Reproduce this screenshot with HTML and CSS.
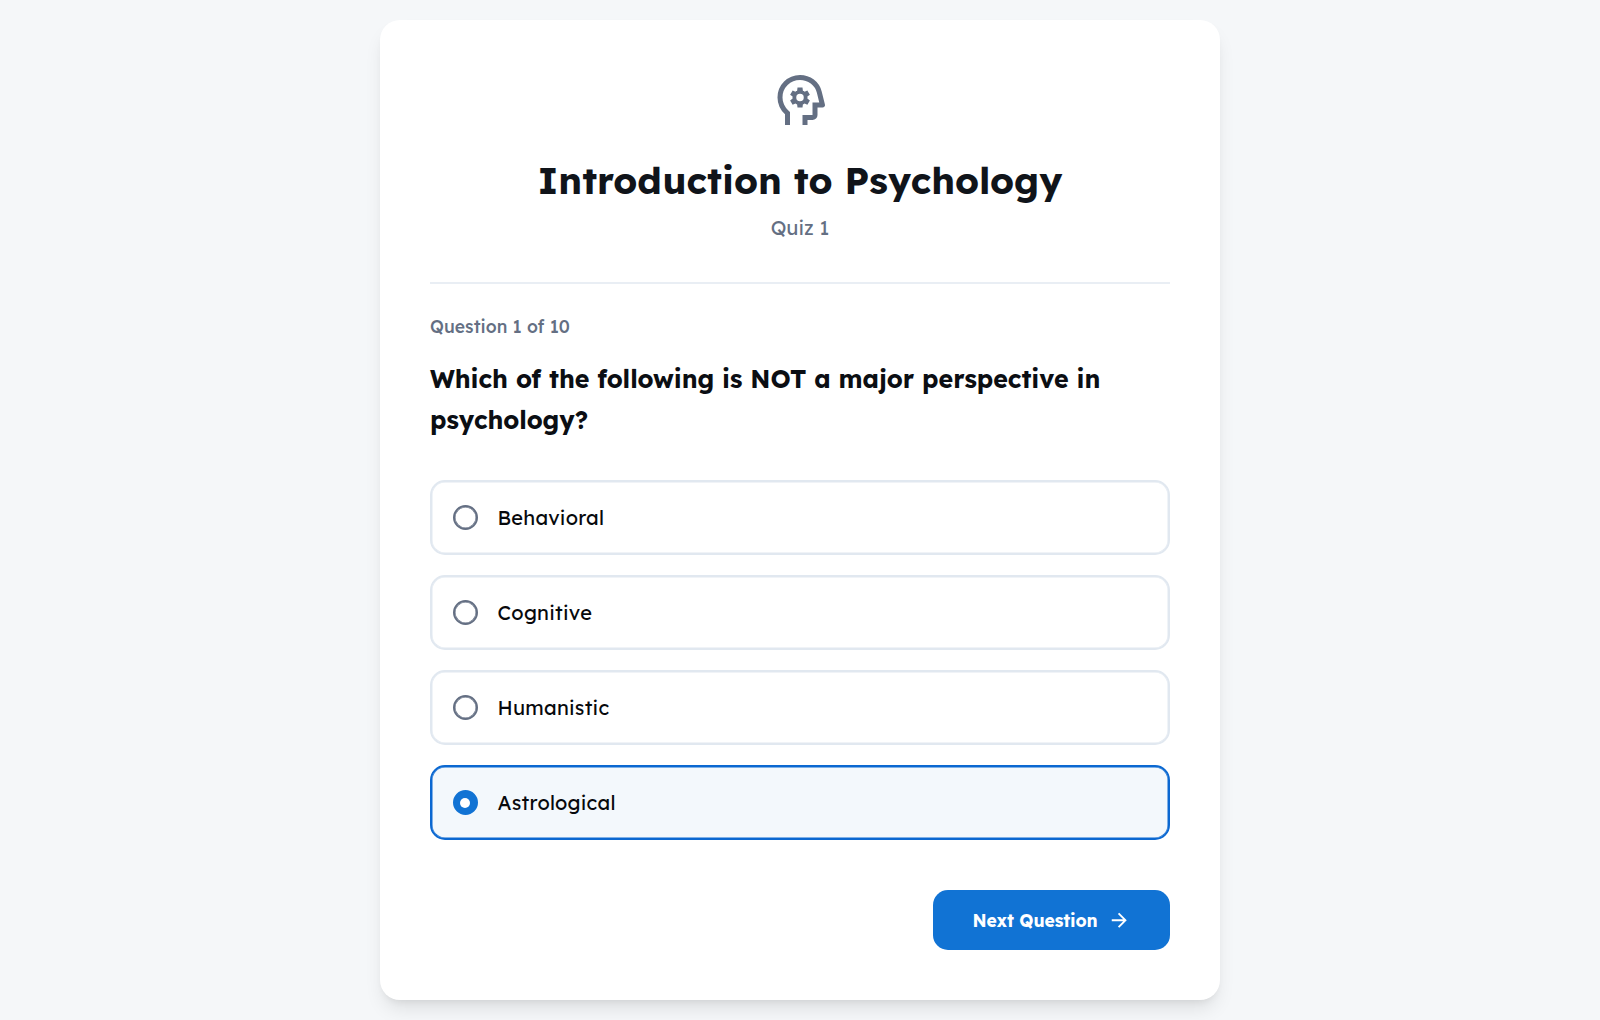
FILE: index.html
```html
<!DOCTYPE html>
<html lang="en">
<head>
<meta charset="utf-8">
<title>Introduction to Psychology</title>
<link rel="stylesheet" href="styles.css">
</head>
<body>
<main class="card">
  <header class="header">
    <svg class="logo" viewBox="0 -960 960 960" aria-hidden="true"><path d="M240-80v-172q-57-52-88.500-121.500T120-520q0-150 105-255t255-105q125 0 221.500 73.500T827-615l52 205q5 19-7 34.500T840-360h-80v120q0 33-23.500 56.500T680-160h-80v80h-80v-160h160v-200h108l-38-155q-23-91-98-148t-172-57q-116 0-198 81t-82 197q0 60 24.500 114t69.500 96l26 24v208h-80ZM440-360h80l6-50q8-3 14.500-7t11.500-9l46 20 40-68-40-30q2-8 2-16t-2-16l40-30-40-68-46 20q-5-5-11.500-9t-14.500-7l-6-50h-80l-6 50q-8 3-14.500 7t-11.500 9l-46-20-40 68 40 30q-2 8-2 16t2 16l-40 30 40 68 46-20q5 5 11.500 9t14.500 7l6 50Zm40-100a60 60 0 1 1 0-120 60 60 0 1 1 0 120Z"/></svg>
    <h1 class="title">Introduction to Psychology</h1>
    <p class="subtitle">Quiz 1</p>
  </header>
  <section class="quiz">
    <p class="progress">Question 1 of 10</p>
    <h2 class="question">Which of the following is NOT a major perspective in psychology?</h2>
    <div class="options">
      <label class="option"><span class="radio"></span><span>Behavioral</span></label>
      <label class="option"><span class="radio"></span><span>Cognitive</span></label>
      <label class="option"><span class="radio"></span><span>Humanistic</span></label>
      <label class="option selected"><span class="radio"></span><span>Astrological</span></label>
    </div>
    <button class="next" type="button"><span>Next Question</span><svg class="arrow" viewBox="0 -960 960 960" aria-hidden="true"><path d="M647-440H160v-80h487L423-744l57-56 320 320-320 320-57-56 224-224Z"/></svg></button>
  </section>
</main>
</body>
</html>
```
FILE: styles.css
```css
* { box-sizing: border-box; }

body {
  margin: 0;
  height: 1020px;
  padding: 20px;
  overflow: hidden;
  background: #f5f7f9;
  color: #0b0e13;
  font-family: Lexend, Inter, sans-serif;
}

h1, h2, p { margin: 0; }

.card {
  width: 840px;
  height: 980px;
  margin: 0 auto;
  padding: 50px;
  background: #fff;
  border-radius: 20px;
  box-shadow: 0 12px 19px -4px rgba(0, 0, 0, .1), 0 5px 8px -5px rgba(0, 0, 0, .1);
}

.header {
  display: flex;
  flex-direction: column;
  align-items: center;
  height: 214px;
  border-bottom: 2px solid #e9eef4;
}

.logo {
  width: 60px;
  height: 60px;
  fill: #646f83;
}

.title {
  margin-top: 25px;
  font-size: 37.5px;
  line-height: 50px;
  font-weight: 700;
  white-space: nowrap;
  color: #10141a;
}

.subtitle {
  margin-top: 8px;
  font-size: 20px;
  line-height: 30px;
  color: #646f83;
}

.quiz {
  display: flex;
  flex-direction: column;
}

.progress {
  margin-top: 29px;
  font-size: 17.5px;
  line-height: 26px;
  font-weight: 470;
  letter-spacing: .05px;
  color: #646f83;
}

.question {
  margin-top: 19px;
  font-size: 25px;
  line-height: 41.25px;
  font-weight: 700;
  letter-spacing: -.05px;
}

.options {
  display: flex;
  flex-direction: column;
  gap: 20px;
  margin-top: 39.5px;
}

.option {
  display: flex;
  align-items: center;
  gap: 20px;
  height: 75px;
  padding: 0 20.5px;
  border: 2px solid #e1e8f0;
  border-radius: 15px;
  box-shadow: inset 0 0 0 .5px #e1e8f0;
  color: #07090c;
  font-size: 20px;
  font-weight: 450;
  letter-spacing: .25px;
}

.radio {
  display: grid;
  place-items: center;
  width: 25px;
  height: 25px;
  border: 2px solid #646f83;
  border-radius: 50%;
  box-shadow: inset 0 0 0 .5px #646f83;
}

.selected {
  border-color: #0b68d1;
  background: #f3f8fc;
  box-shadow: inset 0 0 0 .5px #0b68d1;
}

.selected .radio {
  border-color: #1173d4;
  background: #1173d4;
  box-shadow: none;
}

.selected .radio::after {
  content: "";
  width: 10px;
  height: 10px;
  border-radius: 50%;
  background: #fff;
}

.next {
  display: flex;
  align-items: center;
  align-self: flex-end;
  justify-content: center;
  gap: 10px;
  width: 237.5px;
  height: 60px;
  margin-top: 50px;
  padding: 0;
  border: 0;
  border-radius: 15px;
  background: #1173d4;
  color: #fff;
  font: inherit;
  font-size: 17.5px;
  line-height: 24px;
  font-weight: 700;
  letter-spacing: -.12px;
  white-space: nowrap;
}

.arrow {
  width: 22.5px;
  height: 22.5px;
  fill: currentColor;
}
```
